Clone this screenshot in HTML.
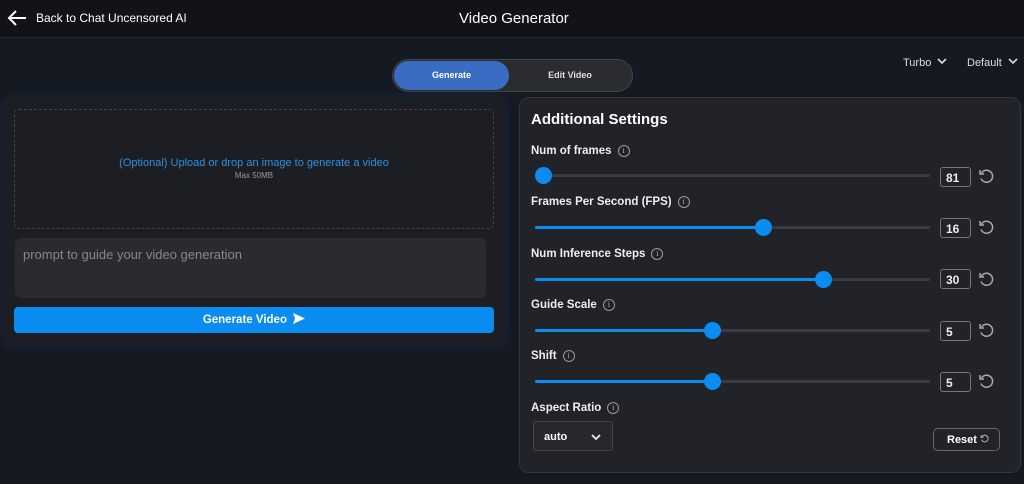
<!DOCTYPE html>
<html><head><meta charset="utf-8"><style>
*{box-sizing:border-box;margin:0;padding:0}
body{width:1024px;height:484px;overflow:hidden;background:#151922;font-family:"Liberation Sans",sans-serif;color:#fff;position:relative}
.a{position:absolute}
.hdr{left:0;top:0;width:1024px;height:38px;background:#111317;border-bottom:1px solid #262a31}
.lbl{font-size:11.5px;font-weight:bold;color:#eee}
.info{display:inline-block;width:12px;height:12px;border:1px solid #999;border-radius:50%;font-size:8px;text-align:center;line-height:10px;color:#aaa;margin-left:6px;vertical-align:1px;font-weight:normal;font-family:"Liberation Serif",serif}
.track{height:3px;background:#3a3c40;border-radius:2px;left:535px;width:395px}
.fill{height:3px;background:#0a8cf0;border-radius:2px;left:535px}
.knob{width:17px;height:17px;border-radius:50%;background:#0a8cf0}
.num{left:940px;width:31px;height:20px;border:1px solid #777;border-radius:3px;font-size:12px;font-weight:bold;padding:3px 0 0 5px;color:#eee}
</style></head><body>
<div class="a" style="left:640px;top:110px;width:180px;height:250px;border-radius:30px;background:#2a2c33;opacity:.5"></div>
<div class="a hdr"></div>
<svg class="a" style="left:7px;top:9px" width="20" height="18" viewBox="0 0 20 18"><path d="M19 9H2M9 2L2 9l7 7" stroke="#fff" stroke-width="2" fill="none"/></svg>
<div class="a" style="left:36px;top:11px;font-size:12px;color:#fff">Back to Chat Uncensored AI</div>
<div class="a" style="left:459px;top:10px;font-size:15px;color:#fff">Video Generator</div>

<div class="a" style="left:392px;top:59px;width:241px;height:33px;border-radius:17px;background:#2b2c2f;border:1px solid #444"></div>
<div class="a" style="left:394px;top:61px;width:115px;height:29px;border-radius:15px;background:#3a6cc4;font-size:9px;font-weight:bold;text-align:center;line-height:29px">Generate</div>
<div class="a" style="left:510px;top:61px;width:120px;height:29px;font-size:9px;font-weight:bold;text-align:center;line-height:29px;color:#ddd">Edit Video</div>
<div class="a" style="left:903px;top:57px;font-size:11px;color:#ddd">Turbo <svg width="10" height="7" viewBox="0 0 10 7" style="margin-left:3px;vertical-align:1px"><path d="M1 1l4 4 4-4" stroke="#ddd" stroke-width="1.6" fill="none"/></svg></div>
<div class="a" style="left:967px;top:57px;font-size:11px;color:#ddd">Default <svg width="10" height="7" viewBox="0 0 10 7" style="margin-left:3px;vertical-align:1px"><path d="M1 1l4 4 4-4" stroke="#ddd" stroke-width="1.6" fill="none"/></svg></div>

<div class="a" style="left:3px;top:97px;width:503px;height:249px;background:#1c1e23;border-radius:10px;box-shadow:0 0 8px rgba(40,90,160,.3)"></div>
<div class="a" style="left:14px;top:109px;width:480px;height:120px;border:1px dashed #444;border-radius:5px;text-align:center;padding-top:47px">
<div style="font-size:11px;color:#2f8fe0">(Optional) Upload or drop an image to generate a video</div>
<div style="font-size:8px;color:#999;margin-top:2px">Max 50MB</div></div>
<div class="a" style="left:15px;top:238px;width:471px;height:60px;background:#2a2b2e;border-radius:6px;font-size:13px;color:#888;padding:9px 8px">prompt to guide your video generation</div>
<div class="a" style="left:14px;top:307px;width:480px;height:26px;background:#0a8cf0;border-radius:4px;text-align:center;font-size:11.5px;font-weight:bold;line-height:26px">Generate Video <svg width="12" height="11" viewBox="0 0 12 11" style="vertical-align:-1px;margin-left:3px"><path d="M0 0L12 5.5 0 11 2 5.5z" fill="#fff"/></svg></div>

<div class="a" style="left:519px;top:97px;width:502px;height:376px;background:rgba(34,36,41,.95);border:1px solid #33353a;border-radius:10px"></div>
<div class="a" style="left:531px;top:111px;font-size:15px;font-weight:bold">Additional Settings</div>

<div class="a lbl" style="left:531px;top:145px">Num of frames<span class="info">i</span></div>
<div class="a track" style="top:174px"></div><div class="a knob" style="left:535px;top:167px"></div>
<div class="a num" style="top:167px">81</div>
<div class="a lbl" style="left:531px;top:196px">Frames Per Second (FPS)<span class="info">i</span></div>
<div class="a track" style="top:226px"></div><div class="a fill" style="top:226px;width:228px"></div><div class="a knob" style="left:755px;top:219px"></div>
<div class="a num" style="top:218px">16</div>
<div class="a lbl" style="left:531px;top:248px">Num Inference Steps<span class="info">i</span></div>
<div class="a track" style="top:278px"></div><div class="a fill" style="top:278px;width:288px"></div><div class="a knob" style="left:815px;top:271px"></div>
<div class="a num" style="top:269px">30</div>
<div class="a lbl" style="left:531px;top:299px">Guide Scale<span class="info">i</span></div>
<div class="a track" style="top:329px"></div><div class="a fill" style="top:329px;width:177px"></div><div class="a knob" style="left:704px;top:322px"></div>
<div class="a num" style="top:321px">5</div>
<div class="a lbl" style="left:531px;top:350px">Shift<span class="info">i</span></div>
<div class="a track" style="top:380px"></div><div class="a fill" style="top:380px;width:177px"></div><div class="a knob" style="left:704px;top:373px"></div>
<div class="a num" style="top:372px">5</div>

<svg class="a" style="left:978px;top:168px" width="18" height="230" viewBox="0 0 18 230" fill="none" stroke="#aaa" stroke-width="1.5">
<g id="r"><path d="M3.5 5A6 6 0 1 1 3 10.5"/><path d="M2 2v4h4"/></g>
<use href="#r" y="51"/><use href="#r" y="103"/><use href="#r" y="154"/><use href="#r" y="205"/>
</svg>

<div class="a lbl" style="left:531px;top:402px">Aspect Ratio<span class="info">i</span></div>
<div class="a" style="left:533px;top:421px;width:80px;height:30px;border:1px solid #444;border-radius:3px;background:#26282c;font-size:11px;font-weight:bold;padding:9px 0 0 10px">auto<svg class="a" style="left:57px;top:12px" width="10" height="7" viewBox="0 0 10 7"><path d="M1 1l4 4 4-4" stroke="#eee" stroke-width="1.8" fill="none"/></svg></div>
<div class="a" style="left:933px;top:428px;width:67px;height:23px;border:1px solid #666;border-radius:5px;font-size:11px;font-weight:bold;padding:5px 0 0 13px">Reset <svg width="10" height="10" viewBox="0 0 18 18" fill="none" stroke="#aaa" stroke-width="2" style="vertical-align:-1px"><path d="M3.5 5A6 6 0 1 1 3 10.5"/><path d="M2 2v4h4"/></svg></div>
</body></html>
